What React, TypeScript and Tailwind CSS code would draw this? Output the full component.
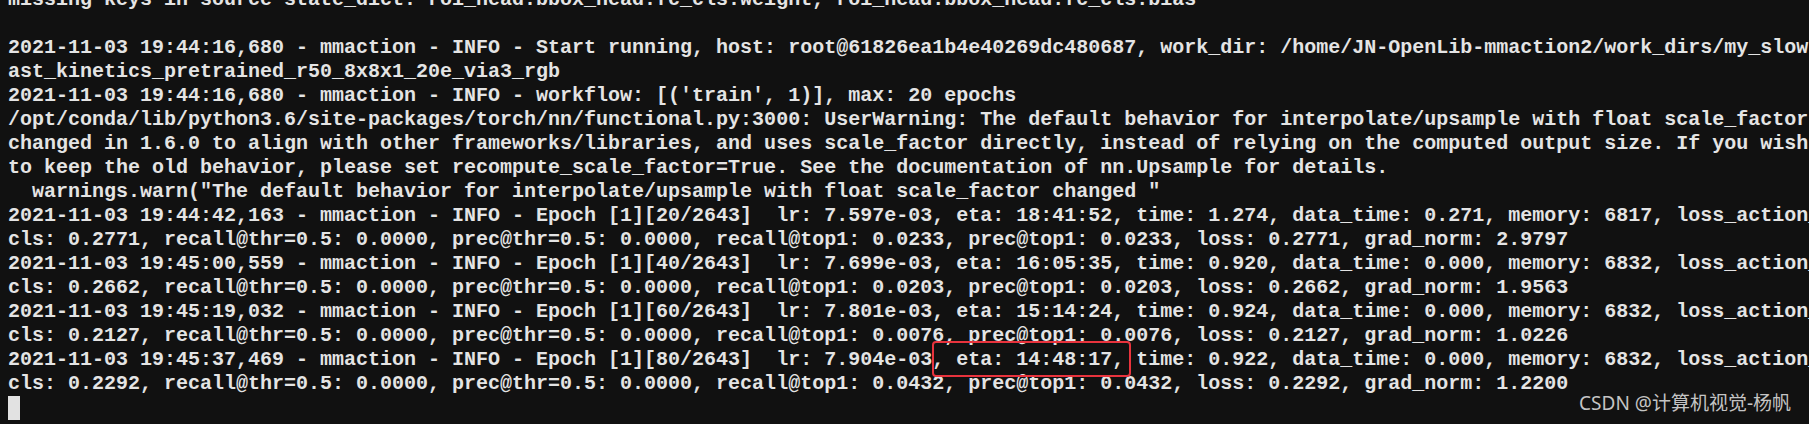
const lines = [
  "missing keys in source state_dict: roi_head.bbox_head.fc_cls.weight, roi_head.bbox_head.fc_cls.bias",
  "",
  "2021-11-03 19:44:16,680 - mmaction - INFO - Start running, host: root@61826ea1b4e40269dc480687, work_dir: /home/JN-OpenLib-mmaction2/work_dirs/my_slow",
  "ast_kinetics_pretrained_r50_8x8x1_20e_via3_rgb",
  "2021-11-03 19:44:16,680 - mmaction - INFO - workflow: [('train', 1)], max: 20 epochs",
  "/opt/conda/lib/python3.6/site-packages/torch/nn/functional.py:3000: UserWarning: The default behavior for interpolate/upsample with float scale_factor",
  "changed in 1.6.0 to align with other frameworks/libraries, and uses scale_factor directly, instead of relying on the computed output size. If you wish",
  "to keep the old behavior, please set recompute_scale_factor=True. See the documentation of nn.Upsample for details.",
  '  warnings.warn("The default behavior for interpolate/upsample with float scale_factor changed "',
  "2021-11-03 19:44:42,163 - mmaction - INFO - Epoch [1][20/2643]  lr: 7.597e-03, eta: 18:41:52, time: 1.274, data_time: 0.271, memory: 6817, loss_action_",
  "cls: 0.2771, recall@thr=0.5: 0.0000, prec@thr=0.5: 0.0000, recall@top1: 0.0233, prec@top1: 0.0233, loss: 0.2771, grad_norm: 2.9797",
  "2021-11-03 19:45:00,559 - mmaction - INFO - Epoch [1][40/2643]  lr: 7.699e-03, eta: 16:05:35, time: 0.920, data_time: 0.000, memory: 6832, loss_action_",
  "cls: 0.2662, recall@thr=0.5: 0.0000, prec@thr=0.5: 0.0000, recall@top1: 0.0203, prec@top1: 0.0203, loss: 0.2662, grad_norm: 1.9563",
  "2021-11-03 19:45:19,032 - mmaction - INFO - Epoch [1][60/2643]  lr: 7.801e-03, eta: 15:14:24, time: 0.924, data_time: 0.000, memory: 6832, loss_action_",
  "cls: 0.2127, recall@thr=0.5: 0.0000, prec@thr=0.5: 0.0000, recall@top1: 0.0076, prec@top1: 0.0076, loss: 0.2127, grad_norm: 1.0226",
  "2021-11-03 19:45:37,469 - mmaction - INFO - Epoch [1][80/2643]  lr: 7.904e-03, eta: 14:48:17, time: 0.922, data_time: 0.000, memory: 6832, loss_action_",
  "cls: 0.2292, recall@thr=0.5: 0.0000, prec@thr=0.5: 0.0000, recall@top1: 0.0432, prec@top1: 0.0432, loss: 0.2292, grad_norm: 1.2200",
];

export default function App() {
  return (
    <div className="relative w-full h-[424px] overflow-hidden bg-[#111111]">
      {/* terminal output, first line scrolled half out of view */}
      <div className="-mt-[12px] pl-2 font-['Liberation_Mono',monospace] text-[20px] leading-[24px] font-bold text-[#e4e4e4]">
        {lines.map((l, i) => (
          <div key={i} className="h-[24px] whitespace-pre">
            {l}
          </div>
        ))}
        <div className="h-[24px]">
          <div className="w-[12px] h-[24px] bg-[#e2e2e2]" />
        </div>
      </div>

      {/* highlight annotation */}
      <div className="absolute left-[932px] top-[341px] w-[199px] h-[36px] rounded-[4px] border-2 border-[#e8333d]" />

      {/* watermark */}
      <div className="absolute right-[18px] top-[390px] font-['Noto_Sans','Noto_Sans_CJK_SC',sans-serif] text-[19px] leading-[26px] text-[#c4c4c4]">
        CSDN @计算机视觉-杨帆
      </div>
    </div>
  );
}
